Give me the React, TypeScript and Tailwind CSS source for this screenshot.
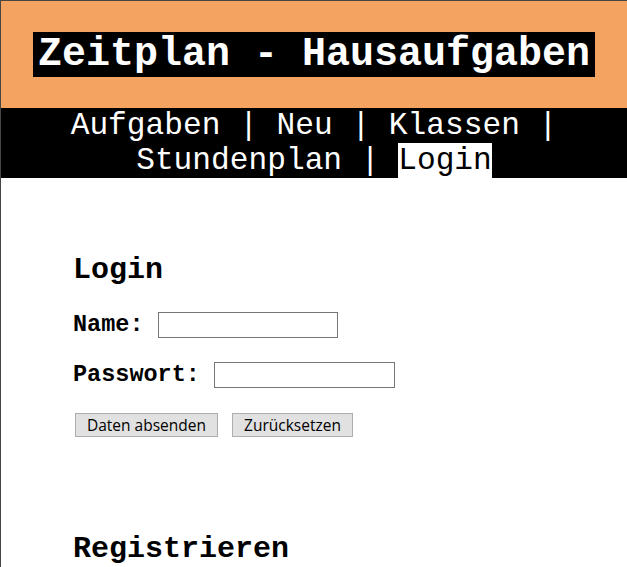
import React from 'react';

const mono = 'font-["Liberation_Mono","Courier_New",monospace]';

function NavBar() {
  return (
    <nav className={`bg-black text-white text-center text-[31.2px] leading-[35px] ${mono}`}>
      Aufgaben | Neu | Klassen | Stundenplan |{' '}
      <span className="inline-block bg-white text-black">Login</span>
    </nav>
  );
}

function Field({ label, width }: { label: string; width: string }) {
  return (
    <div className="flex items-center h-[27px]">
      <label className="font-bold text-[23.5px] leading-[27px]">{label}</label>
      <input
        type={label.startsWith('Pass') ? 'password' : 'text'}
        className={`ml-[14px] h-[26px] ${width} border border-[#767676] bg-white outline-none`}
      />
    </div>
  );
}

export default function App() {
  return (
    <div className={`min-h-screen bg-white text-black border-l border-t border-[#454545] ${mono}`}>
      <header className="bg-[#f4a460] pt-[31px] pb-[31px] text-center">
        <h1 className="inline-block bg-black text-white px-[5px] text-[40px] leading-[45px] font-bold">
          Zeitplan - Hausaufgaben
        </h1>
      </header>
      <NavBar />
      <main className="pl-[72px] pt-[75px]">
        <h2 className="text-[30px] leading-[34px] font-bold">Login</h2>
        <form className="mt-[24px]">
          <Field label="Name:" width="w-[180px]" />
          <div className="mt-[23px]">
            <Field label="Passwort:" width="w-[181px]" />
          </div>
          <div className="mt-[25px] ml-[2px] flex gap-[14px] font-['Open_Sans','Noto_Sans',sans-serif] text-[15.5px]">
            <button type="submit" className="w-[143px] h-[24px] pt-[2px] bg-[#e1e1e1] border border-[#adadad] leading-none">
              Daten absenden
            </button>
            <button type="reset" className="w-[121px] h-[24px] pt-[2px] bg-[#e1e1e1] border border-[#adadad] leading-none">
              Zurücksetzen
            </button>
          </div>
        </form>
        <h2 className="mt-[95px] text-[30px] leading-[34px] font-bold">Registrieren</h2>
      </main>
    </div>
  );
}
